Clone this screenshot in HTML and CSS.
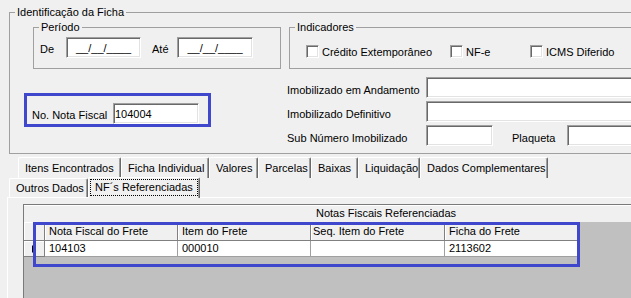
FILE: index.html
```html
<!DOCTYPE html>
<html lang="pt-BR">
  <head>
    <meta charset="UTF-8" />
    <meta name="viewport" content="width=device-width, initial-scale=1.0" />
    <title>Identificação da Ficha</title>
    <link rel="stylesheet" href="styles.css">
  </head>
  <body>
    <div class="window">
      <fieldset class="group ficha">
        <legend>Identificação da Ficha</legend>
        <div class="ficha-cols">
          <div class="col-left">
            <fieldset class="group periodo">
              <legend>Período</legend>
              <div class="periodo-row">
                <label class="lbl-de">De</label>
                <input class="edit date" type="text" value="__/__/____" />
                <label class="lbl-ate">Até</label>
                <input class="edit date date-ate" type="text" value="__/__/____" />
              </div>
            </fieldset>
            <div class="mark nota">
              <label>No. Nota Fiscal</label>
              <input class="edit nota-edit" type="text" value="104004" />
            </div>
          </div>
          <div class="col-right">
            <fieldset class="group indicadores">
              <legend>Indicadores</legend>
              <div class="checks">
                <label class="check chk-credito"><input type="checkbox" />Crédito Extemporâneo</label>
                <label class="check chk-nfe"><input type="checkbox" />NF-e</label>
                <label class="check"><input type="checkbox" />ICMS Diferido</label>
              </div>
            </fieldset>
            <div class="fields">
              <div class="field-row">
                <label class="field-lbl">Imobilizado em Andamento</label>
                <input class="edit wide" type="text" />
              </div>
              <div class="field-row">
                <label class="field-lbl">Imobilizado Definitivo</label>
                <input class="edit wide" type="text" />
              </div>
              <div class="field-row">
                <label class="field-lbl">Sub Número Imobilizado</label>
                <input class="edit sub" type="text" />
                <label class="field-lbl plaqueta">Plaqueta</label>
                <input class="edit wide" type="text" />
              </div>
            </div>
          </div>
        </div>
      </fieldset>

      <div class="tabs">
        <div class="tab-row back">
          <div class="tab" style="width: 103px">Itens Encontrados</div>
          <div class="tab" style="width: 88px">Ficha Individual</div>
          <div class="tab" style="width: 49px">Valores</div>
          <div class="tab" style="width: 53px">Parcelas</div>
          <div class="tab" style="width: 47px">Baixas</div>
          <div class="tab" style="width: 62px">Liquidação</div>
          <div class="tab" style="width: 128px">Dados Complementares</div>
        </div>
        <div class="tab-row front">
          <div class="tab" style="width: 79px">Outros Dados</div>
          <div class="tab active" style="width: 112px"><span class="focus">NF´s Referenciadas</span></div>
        </div>
        <div class="page">
          <div class="grid">
            <div class="grid-title">Notas Fiscais Referenciadas</div>
            <div class="grid-row head">
              <div class="cell ind"></div>
              <div class="cell c1">Nota Fiscal do Frete</div>
              <div class="cell c2">Item do Frete</div>
              <div class="cell c3">Seq. Item do Frete</div>
              <div class="cell c4">Ficha do Frete</div>
            </div>
            <div class="grid-row data">
              <div class="cell ind"><span class="arrow"></span></div>
              <div class="cell c1">104103</div>
              <div class="cell c2">000010</div>
              <div class="cell c3"></div>
              <div class="cell c4">2113602</div>
            </div>
            <div class="mark grid-mark"></div>
          </div>
        </div>
      </div>
    </div>
  </body>
</html>
```

FILE: styles.css
```css
body {
  margin: 0;
  width: 631px;
  height: 298px;
  overflow: hidden;
  background-color: #f0f0f0;
  font-family: "Liberation Sans", Arial, sans-serif;
  font-size: 11px;
  color: #000;
}
.window {
  width: 631px;
}
label {
  white-space: nowrap;
}

/* group boxes */
.group {
  box-sizing: border-box;
  min-width: 0;
  margin: 0;
  padding: 0;
  border: 1px solid #a0a0a0;
}
.group legend {
  margin-left: 5px;
  padding: 0 2px;
  line-height: 14px;
}
.ficha {
  margin: 5px 0 0 9px;
  width: 622px;
  height: 149px;
  border-right: 0;
}
.ficha-cols {
  display: flex;
  margin-left: 14px;
}
.col-left {
  width: 188px;
}
.col-right {
  margin-left: 75px;
  flex: 1;
}

/* edit boxes */
.edit {
  box-sizing: border-box;
  height: 21px;
  margin: 0;
  padding: 0 1px;
  border: 1px solid;
  border-color: #a0a0a0 #fff #fff #a0a0a0;
  box-shadow: inset 1px 1px 0 #696969, inset -1px -1px 0 #e3e3e3;
  background-color: #fff;
  font-family: "Liberation Sans", Arial, sans-serif;
  font-size: 11px;
  color: #000;
  outline: none;
}

/* periodo */
.periodo {
  margin: 1px 0 0 9px;
  width: 248px;
  height: 49px;
}
.periodo-row {
  display: flex;
  align-items: flex-end;
  padding: 3px 0 0 6px;
}
.periodo-row label {
  line-height: 12px;
  margin-bottom: 3px;
}
.lbl-de {
  width: 26px;
}
.lbl-ate {
  width: 25px;
  margin-left: 11px;
}
.date {
  width: 75px;
  text-align: center;
}
.date-ate {
  width: 76px;
}

/* blue marks */
.mark {
  box-sizing: border-box;
  border: 3px solid #3f48cc;
}
.nota {
  display: flex;
  align-items: flex-end;
  margin-top: 24px;
  width: 187px;
  height: 34px;
  padding: 2px 0 0 5px;
}
.nota label {
  width: 81px;
  line-height: 12px;
  margin-bottom: 3px;
}
.nota-edit {
  width: 86px;
}

/* indicadores */
.indicadores {
  margin: 1px 0 0 2px;
  width: 342px;
  height: 49px;
  border-right: 0;
}
.checks {
  display: flex;
  align-items: center;
  height: 17px;
  padding: 9px 0 0 16px;
}
.check {
  display: flex;
  align-items: center;
  gap: 3px;
}
.chk-credito {
  width: 144px;
}
.chk-nfe {
  width: 80px;
}
.check input {
  appearance: none;
  box-sizing: border-box;
  width: 13px;
  height: 13px;
  margin: 0;
  border: 1px solid;
  border-color: #a0a0a0 #fff #fff #a0a0a0;
  box-shadow: inset 1px 1px 0 #696969, inset -1px -1px 0 #e3e3e3;
  background-color: #fff;
}

/* imobilizado fields */
.fields {
  display: flex;
  flex-direction: column;
  gap: 3px;
  margin-top: 8px;
}
.field-row {
  display: flex;
  align-items: flex-end;
}
.field-lbl {
  width: 139px;
  line-height: 12px;
  margin-bottom: 2px;
}
.field-row .edit.wide {
  flex: 1;
  min-width: 0;
  border-right: 0;
}
.field-row .edit.sub {
  width: 67px;
}
.plaqueta {
  width: 55px;
  margin-left: 19px;
}

/* tabs */
.tabs {
  margin: 3px 0 0 7px;
}
.tab-row {
  display: flex;
}
.tab-row.back {
  height: 21px;
  padding-left: 11px;
}
.tab-row.front {
  height: 19px;
  padding-left: 2px;
}
.tab {
  box-sizing: border-box;
  border-top: 1px solid #fff;
  border-left: 1px solid #fff;
  border-right: 1px solid #696969;
  box-shadow: inset -1px 0 0 #a0a0a0;
  border-radius: 2px 2px 0 0;
  padding-left: 6px;
  white-space: nowrap;
}
.back .tab {
  line-height: 20px;
}
.front .tab {
  line-height: 18px;
  padding-left: 6px;
}
.tab.active {
  position: relative;
  z-index: 1;
  height: 21px;
  margin-top: -1px;
  padding: 1px 0 0 1px;
  background-color: #f0f0f0;
  line-height: 15px;
}
.focus {
  display: inline-block;
  border: 1px dotted #000;
  padding: 0 4px;
}

/* tab page */
.page {
  box-sizing: border-box;
  height: 101px;
  border-top: 1px solid #fff;
  border-left: 1px solid #fff;
  background-color: #f0f0f0;
  padding: 6px 0 0 15px;
}

/* grid */
.grid {
  position: relative;
  box-sizing: border-box;
  height: 94px;
  border-top: 1px solid #7a7a7a;
  border-left: 1px solid #7a7a7a;
  background-color: #c0c0c0;
  overflow: hidden;
}
.grid-title {
  height: 17px;
  line-height: 17px;
  padding-left: 292px;
  background-color: #f0f0f0;
  box-shadow: inset 0 1px 0 #fff;
}
.grid-row {
  display: flex;
}
.cell {
  box-sizing: border-box;
  border-right: 1px solid #a0a0a0;
  border-bottom: 1px solid #a0a0a0;
  padding-left: 4px;
  white-space: nowrap;
  overflow: hidden;
}
.head .cell {
  height: 19px;
  line-height: 18px;
  background-color: #f0f0f0;
  box-shadow: inset 1px 1px 0 #fff;
  border-color: #808080;
}
.data .cell {
  height: 16px;
  line-height: 15px;
  background-color: #fff;
}
.cell.ind {
  width: 21px;
  padding: 0;
  border-color: #808080;
}
.data .cell.ind {
  background-color: #f0f0f0;
  box-shadow: inset 1px 1px 0 #fff;
  display: flex;
  align-items: center;
  padding-left: 8px;
}
.arrow {
  width: 0;
  height: 0;
  border-left: 4px solid #000;
  border-top: 4px solid transparent;
  border-bottom: 4px solid transparent;
}
.c1 {
  width: 133px;
}
.c2 {
  width: 133px;
}
.c3 {
  width: 134px;
  padding-left: 2px;
}
.c4 {
  width: 133px;
  border-right-color: #696969;
}
.grid-mark {
  position: absolute;
  left: 9px;
  top: 17px;
  width: 547px;
  height: 45px;
}
```
